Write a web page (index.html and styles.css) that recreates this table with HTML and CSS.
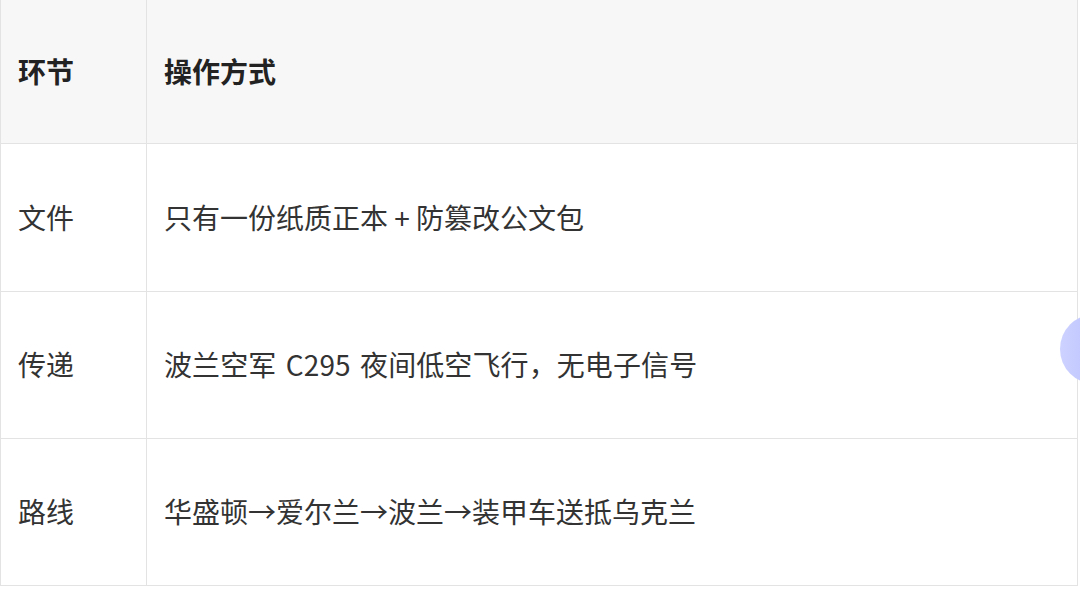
FILE: index.html
```html
<!DOCTYPE html>
<html lang="zh-CN">

<head>
  <meta charset="UTF-8">
  <meta name="viewport" content="width=device-width, initial-scale=1.0">
  <title>环节 / 操作方式</title>

  <link rel="stylesheet" href="styles.css">
</head>

<body>
  <div class="page">
    <table class="steps">
      <thead>
        <tr>
          <th class="col-step">环节</th>
          <th>操作方式</th>
        </tr>
      </thead>
      <tbody>
        <tr class="first">
          <td class="col-step">文件</td>
          <td>只有一份纸质正本 + 防篡改公文包</td>
        </tr>
        <tr>
          <td class="col-step">传递</td>
          <td class="wide-latin">波兰空军 C295 夜间低空飞行，无电子信号</td>
        </tr>
        <tr>
          <td class="col-step">路线</td>
          <td>华盛顿→爱尔兰→波兰→装甲车送抵乌克兰</td>
        </tr>
      </tbody>
    </table>

    <div class="float-ball"></div>
  </div>
</body>

</html>
```

FILE: styles.css
```css
body,
html {
  margin: 0;
  padding: 0;
  background-color: #fff;
  font-family: "Noto Sans CJK SC", "Noto Sans", sans-serif;
  overflow: hidden;
}

.page {
  position: relative;
  width: 1080px;
  height: 590px;
}

.steps {
  border-collapse: collapse;
  width: 1078px;
  margin-top: -1px;
  font-size: 28px;
  color: #333;
}

.steps th,
.steps td {
  border: 1px solid #e3e3e3;
  padding: 0 17px;
  text-align: left;
  vertical-align: middle;
  line-height: 1.4;
}

.steps th {
  height: 143px;
  background-color: #f7f7f7;
  font-weight: bold;
  color: #222;
}

.steps td {
  height: 146px;
}

.steps .first td {
  height: 147px;
}

.steps .col-step {
  width: 111px;
}

.wide-latin {
  word-spacing: 3px;
  letter-spacing: 0.1px;
}

.float-ball {
  position: absolute;
  left: 1060px;
  top: 315px;
  width: 70px;
  height: 70px;
  border-radius: 50%;
  background: linear-gradient(90deg, #cdd2ff, #adb5ff);
}
```
